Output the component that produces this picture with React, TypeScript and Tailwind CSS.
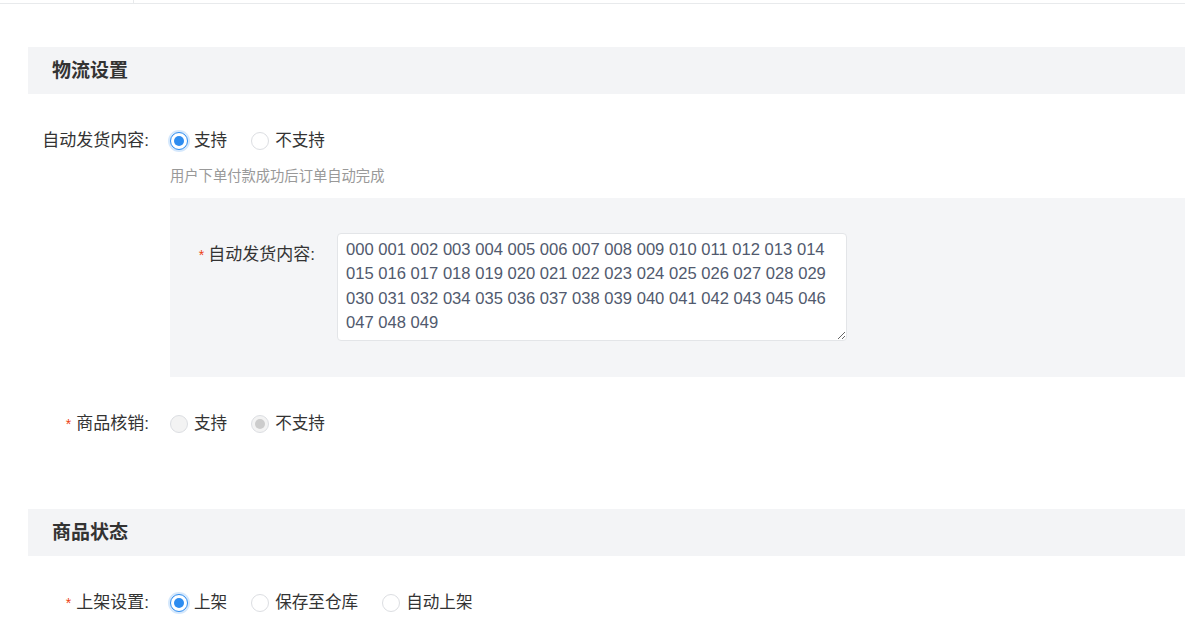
import React from "react";

const FONT = { fontFamily: '"Liberation Sans", "Noto Sans CJK SC", sans-serif' };

const CODES =
  "000 001 002 003 004 005 006 007 008 009 010 011 012 013 014 015 016 017 018 019 020 021 022 023 024 025 026 027 028 029 030 031 032 034 035 036 037 038 039 040 041 042 043 045 046 047 048 049";

function Radio({
  label,
  checked = false,
  disabled = false,
}: {
  label: string;
  checked?: boolean;
  disabled?: boolean;
}) {
  return (
    <label className="flex items-center gap-[6px]">
      <span
        className={
          checked && !disabled
            ? "flex h-[18px] w-[18px] items-center justify-center rounded-full border border-[#2d8cf0] bg-white shadow-[0_0_0_2px_rgba(45,140,240,0.2)]"
            : disabled
              ? "flex h-[18px] w-[18px] items-center justify-center rounded-full border border-[#dcdee2] bg-[#f3f3f3]"
              : "flex h-[18px] w-[18px] items-center justify-center rounded-full border border-[#dcdee2] bg-white"
        }
      >
        {checked && (
          <span
            className={
              disabled
                ? "h-[10px] w-[10px] rounded-full bg-[#cccccc]"
                : "h-[10px] w-[10px] rounded-full bg-[#2d8cf0]"
            }
          />
        )}
      </span>
      <span className="text-[16.6px] leading-[20px] text-[#333]">{label}</span>
    </label>
  );
}

function SectionTitle({ title }: { title: string }) {
  return (
    <div className="ml-[28px] flex h-[47px] items-center bg-[#f3f4f6] pl-[24px] pt-[2px]">
      <h2 className="text-[19px] font-bold text-[#333]">{title}</h2>
    </div>
  );
}

function Label({ text, required = false }: { text: string; required?: boolean }) {
  return (
    <div className="w-[121px] shrink-0 text-right text-[17px] leading-[20px] text-[#333]">
      {required && <span className="mr-[5px] text-[14px] text-[#ed4014]">*</span>}
      {text}
    </div>
  );
}

export default function App() {
  return (
    <div className="min-h-screen overflow-hidden bg-white" style={FONT}>
      <div className="h-[4px] border-b border-[#e8eaec]">
        <div className="h-full w-[134px] border-r border-[#e8eaec]" />
      </div>

      <div className="mt-[43px]">
        <SectionTitle title="物流设置" />

        <div className="mt-[37px] flex items-start pl-[28px]">
          <Label text="自动发货内容:" />
          <div className="ml-[21px] flex-1">
            <div className="flex h-[20px] items-center gap-[24px]">
              <Radio label="支持" checked />
              <Radio label="不支持" />
            </div>
            <p className="mt-[15px] text-[14.3px] leading-[20px] text-[#999]">
              用户下单付款成功后订单自动完成
            </p>
            <div className="mt-[12px] flex items-start bg-[#f4f5f7] pb-[36px] pt-[35px]">
              <div className="mt-[12px] w-[145px] shrink-0 text-right text-[17px] leading-[20px] text-[#333]">
                <span className="mr-[4px] text-[14px] text-[#ed4014]">*</span>
                自动发货内容:
              </div>
              <textarea
                readOnly
                value={CODES}
                className="ml-[22px] h-[108px] w-[510px] rounded-[4px] border border-[#e3e5e8] bg-white px-[8px] pt-[4px] text-[16.6px] leading-[24.4px] text-[#515a6e] outline-none"
                style={FONT}
              />
            </div>
          </div>
        </div>

        <div className="mt-[37px] flex items-center pl-[28px]">
          <Label text="商品核销:" required />
          <div className="ml-[21px] flex h-[20px] items-center gap-[24px]">
            <Radio label="支持" disabled />
            <Radio label="不支持" checked disabled />
          </div>
        </div>
      </div>

      <div className="mt-[75px]">
        <SectionTitle title="商品状态" />
        <div className="mt-[37px] flex items-center pl-[28px]">
          <Label text="上架设置:" required />
          <div className="ml-[21px] flex h-[20px] items-center gap-[24px]">
            <Radio label="上架" checked />
            <Radio label="保存至仓库" />
            <Radio label="自动上架" />
          </div>
        </div>
      </div>
    </div>
  );
}
